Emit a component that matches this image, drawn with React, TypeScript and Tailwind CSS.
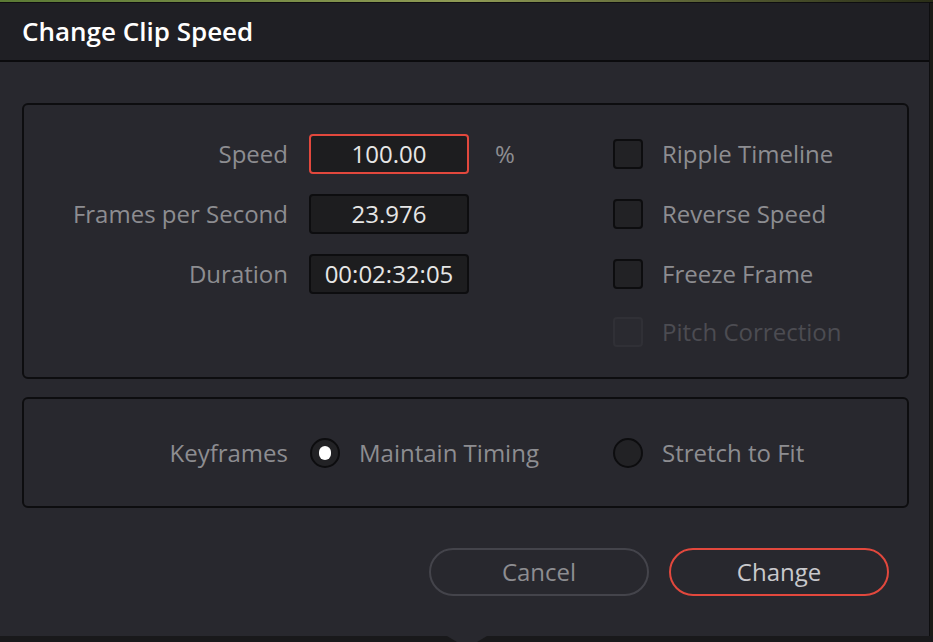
import { useState } from 'react';

const FONT = { fontFamily: '"Open Sans", "Noto Sans", sans-serif' };

function Field({ value, active }: { value: string; active?: boolean }) {
    return (
        <div
            className={
                'w-[160px] h-[40px] flex items-center justify-center rounded-[4px] border-2 bg-[#1d1d1f] text-[24px] text-[#e6e6e6] ' +
                (active ? 'border-[#e2483d]' : 'border-[#0d0d0f]')
            }
        >
            {value}
        </div>
    );
}

function Check({ label, disabled }: { label: string; disabled?: boolean }) {
    return (
        <div className="flex items-center h-[30px] gap-[19px]">
            <div
                className={
                    'w-[30px] h-[30px] rounded-[4px] border-2 ' +
                    (disabled ? 'border-[#303036] bg-[#2a2a30]' : 'border-[#0d0d0f] bg-[#222225]')
                }
            />
            <span className={'text-[24px] ' + (disabled ? 'text-[#4c4c52]' : 'text-[#8d8d91]')}>{label}</span>
        </div>
    );
}

function Radio({ label, checked }: { label: string; checked?: boolean }) {
    return (
        <div className="flex items-center gap-[19px]">
            <div className="w-[30px] h-[30px] rounded-full border-2 border-[#0d0d0f] bg-[#222225] flex items-center justify-center">
                {checked && <div className="w-[12px] h-[14px] rounded-full bg-white" />}
            </div>
            <span className="text-[24px] text-[#8d8d91]">{label}</span>
        </div>
    );
}

export default function App() {
    const [speed] = useState('100.00');

    return (
        <div className="w-[933px] h-[642px] overflow-hidden bg-[#18181a] flex flex-col" style={FONT}>
            {/* photo strip behind the dialog */}
            <div className="h-[2px] bg-gradient-to-r from-[#5b7a35] via-[#8f9a55] to-[#2a2e18]" />

            <div className="flex flex-1 border-t border-[#0e0e10]">
                <div className="w-[930px] flex flex-col bg-[#28282e] border-r border-[#0e0e10]">
                    {/* Header */}
                    <div className="h-[59px] shrink-0 bg-[#1f1f24] flex items-center pl-[22px] border-b-2 border-[#0b0b0d]">
                        <h1 className="text-[26px] font-semibold text-white">Change Clip Speed</h1>
                    </div>

                    <div className="flex flex-col pl-[22px] pr-[20px] pt-[41px]">
                        {/* Speed settings */}
                        <div className="h-[276px] border-2 border-[#0d0d0f] rounded-[6px] flex pt-[29px]">
                            <div className="w-[589px] flex flex-col gap-[20px]">
                                {[
                                    { label: 'Speed', value: speed, active: true, unit: '%' },
                                    { label: 'Frames per Second', value: '23.976' },
                                    { label: 'Duration', value: '00:02:32:05' },
                                ].map((row) => (
                                    <div key={row.label} className="flex items-center h-[40px]">
                                        <span className="w-[264px] text-right text-[24px] text-[#8d8d91]">{row.label}</span>
                                        <div className="ml-[21px]">
                                            <Field value={row.value} active={row.active} />
                                        </div>
                                        {row.unit && <span className="ml-[26px] text-[24px] text-[#8d8d91]">{row.unit}</span>}
                                    </div>
                                ))}
                            </div>
                            <div className="flex flex-col pt-[5px] gap-[30px]">
                                <Check label="Ripple Timeline" />
                                <Check label="Reverse Speed" />
                                <Check label="Freeze Frame" />
                                <div className="-mt-[2px]">
                                    <Check label="Pitch Correction" disabled />
                                </div>
                            </div>
                        </div>

                        {/* Keyframes */}
                        <div className="mt-[18px] h-[111px] border-2 border-[#0d0d0f] rounded-[6px] flex items-center">
                            <span className="w-[264px] text-right text-[24px] text-[#8d8d91]">Keyframes</span>
                            <div className="ml-[22px] w-[303px]">
                                <Radio label="Maintain Timing" checked />
                            </div>
                            <Radio label="Stretch to Fit" />
                        </div>

                        {/* Buttons */}
                        <div className="mt-[40px] flex justify-end gap-[20px] pr-[20px]">
                            <button className="w-[220px] h-[48px] rounded-full border-2 border-[#44444b] text-[24px] text-[#8d8d91]">
                                Cancel
                            </button>
                            <button className="w-[220px] h-[48px] rounded-full border-2 border-[#e2483d] text-[24px] text-[#c9c9cc]">
                                Change
                            </button>
                        </div>
                    </div>
                </div>
                <div className="flex-1 bg-[#1b1b16]" />
            </div>

            {/* bottom strip with popover arrow */}
            <div className="h-[6px] shrink-0 bg-[#19191b] flex">
                <div className="ml-[447px] w-[40px] h-[6px] bg-[#28282e] [clip-path:polygon(0_0,100%_0,75%_100%,25%_100%)]" />
            </div>
        </div>
    );
}
